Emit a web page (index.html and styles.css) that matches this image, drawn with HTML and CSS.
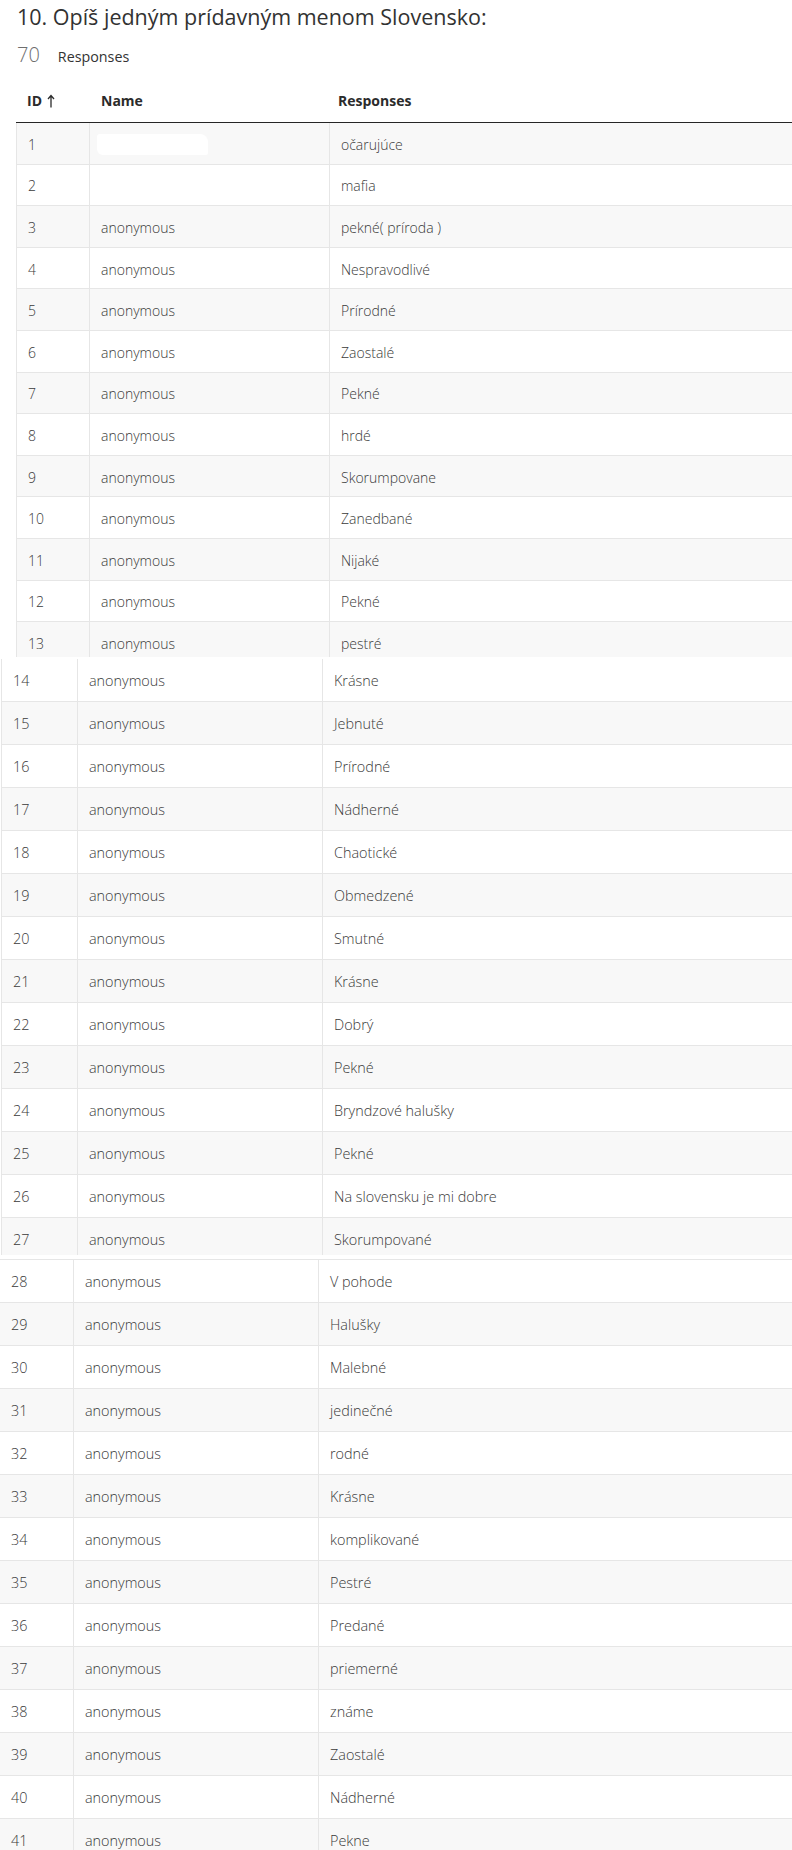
FILE: index.html
```html
<!DOCTYPE html>
<html lang="sk">
<head>
<meta charset="utf-8">
<title>10. Opíš jedným prídavným menom Slovensko</title>
<link rel="stylesheet" href="styles.css">
</head>
<body>
<main class="report">
  <h1 class="question">10. Opíš jedným prídavným menom Slovensko:</h1>
  <div class="summary"><span class="summary-count">70</span><span class="summary-label">Responses</span></div>

  <section class="part part-1">
    <div class="row row-head">
      <div class="cell">ID<svg class="sort-icon" width="8" height="14" viewBox="0 0 8 14"><path d="M4 1.5V13.5M1 5L4 1.5L7 5" fill="none" stroke="#2b2b2b" stroke-width="1.3"/></svg></div>
      <div class="cell">Name</div>
      <div class="cell">Responses</div>
    </div>
    <div class="row"><div class="cell">1</div><div class="cell"><span class="redacted"></span></div><div class="cell">očarujúce</div></div>
    <div class="row"><div class="cell">2</div><div class="cell"></div><div class="cell">mafia</div></div>
    <div class="row"><div class="cell">3</div><div class="cell">anonymous</div><div class="cell">pekné( príroda )</div></div>
    <div class="row"><div class="cell">4</div><div class="cell">anonymous</div><div class="cell">Nespravodlivé</div></div>
    <div class="row"><div class="cell">5</div><div class="cell">anonymous</div><div class="cell">Prírodné</div></div>
    <div class="row"><div class="cell">6</div><div class="cell">anonymous</div><div class="cell">Zaostalé</div></div>
    <div class="row"><div class="cell">7</div><div class="cell">anonymous</div><div class="cell">Pekné</div></div>
    <div class="row"><div class="cell">8</div><div class="cell">anonymous</div><div class="cell">hrdé</div></div>
    <div class="row"><div class="cell">9</div><div class="cell">anonymous</div><div class="cell">Skorumpovane</div></div>
    <div class="row"><div class="cell">10</div><div class="cell">anonymous</div><div class="cell">Zanedbané</div></div>
    <div class="row"><div class="cell">11</div><div class="cell">anonymous</div><div class="cell">Nijaké</div></div>
    <div class="row"><div class="cell">12</div><div class="cell">anonymous</div><div class="cell">Pekné</div></div>
    <div class="row"><div class="cell">13</div><div class="cell">anonymous</div><div class="cell">pestré</div></div>
  </section>

  <section class="part part-2">
    <div class="row"><div class="cell">14</div><div class="cell">anonymous</div><div class="cell">Krásne</div></div>
    <div class="row"><div class="cell">15</div><div class="cell">anonymous</div><div class="cell">Jebnuté</div></div>
    <div class="row"><div class="cell">16</div><div class="cell">anonymous</div><div class="cell">Prírodné</div></div>
    <div class="row"><div class="cell">17</div><div class="cell">anonymous</div><div class="cell">Nádherné</div></div>
    <div class="row"><div class="cell">18</div><div class="cell">anonymous</div><div class="cell">Chaotické</div></div>
    <div class="row"><div class="cell">19</div><div class="cell">anonymous</div><div class="cell">Obmedzené</div></div>
    <div class="row"><div class="cell">20</div><div class="cell">anonymous</div><div class="cell">Smutné</div></div>
    <div class="row"><div class="cell">21</div><div class="cell">anonymous</div><div class="cell">Krásne</div></div>
    <div class="row"><div class="cell">22</div><div class="cell">anonymous</div><div class="cell">Dobrý</div></div>
    <div class="row"><div class="cell">23</div><div class="cell">anonymous</div><div class="cell">Pekné</div></div>
    <div class="row"><div class="cell">24</div><div class="cell">anonymous</div><div class="cell">Bryndzové halušky</div></div>
    <div class="row"><div class="cell">25</div><div class="cell">anonymous</div><div class="cell">Pekné</div></div>
    <div class="row"><div class="cell">26</div><div class="cell">anonymous</div><div class="cell">Na slovensku je mi dobre</div></div>
    <div class="row"><div class="cell">27</div><div class="cell">anonymous</div><div class="cell">Skorumpované</div></div>
  </section>

  <section class="part part-3">
    <div class="row"><div class="cell">28</div><div class="cell">anonymous</div><div class="cell">V pohode</div></div>
    <div class="row"><div class="cell">29</div><div class="cell">anonymous</div><div class="cell">Halušky</div></div>
    <div class="row"><div class="cell">30</div><div class="cell">anonymous</div><div class="cell">Malebné</div></div>
    <div class="row"><div class="cell">31</div><div class="cell">anonymous</div><div class="cell">jedinečné</div></div>
    <div class="row"><div class="cell">32</div><div class="cell">anonymous</div><div class="cell">rodné</div></div>
    <div class="row"><div class="cell">33</div><div class="cell">anonymous</div><div class="cell">Krásne</div></div>
    <div class="row"><div class="cell">34</div><div class="cell">anonymous</div><div class="cell">komplikované</div></div>
    <div class="row"><div class="cell">35</div><div class="cell">anonymous</div><div class="cell">Pestré</div></div>
    <div class="row"><div class="cell">36</div><div class="cell">anonymous</div><div class="cell">Predané</div></div>
    <div class="row"><div class="cell">37</div><div class="cell">anonymous</div><div class="cell">priemerné</div></div>
    <div class="row"><div class="cell">38</div><div class="cell">anonymous</div><div class="cell">známe</div></div>
    <div class="row"><div class="cell">39</div><div class="cell">anonymous</div><div class="cell">Zaostalé</div></div>
    <div class="row"><div class="cell">40</div><div class="cell">anonymous</div><div class="cell">Nádherné</div></div>
    <div class="row"><div class="cell">41</div><div class="cell">anonymous</div><div class="cell">Pekne</div></div>
  </section>
</main>
</body>
</html>
```
FILE: styles.css
```css
* { box-sizing: border-box; }

html, body {
  margin: 0;
  padding: 0;
  background: #ffffff;
}

body {
  font-family: "Open Sans", "Noto Sans", "DejaVu Sans", sans-serif;
  color: #3b3b3b;
  width: 792px;
  height: 1850px;
  overflow: hidden;
}

.report {
  display: flex;
  flex-direction: column;
}

.question {
  margin: 0;
  padding: 2px 0 0 17px;
  font-size: 21.5px;
  line-height: 30px;
  font-weight: 400;
  color: #323232;
}

.summary {
  display: flex;
  align-items: baseline;
  gap: 18px;
  margin-top: 9px;
  padding-left: 17px;
  height: 28px;
  line-height: 28px;
}

.summary-count {
  font-size: 20px;
  font-weight: 300;
  color: #6e6e6e;
}

.summary-label {
  font-size: 14.3px;
  font-weight: 400;
  color: #333333;
}

/* stitched table parts */
.part {
  overflow: hidden;
  flex: none;
}

.row {
  display: grid;
  grid-template-columns: var(--c1) var(--c2) 1fr;
  border-bottom: 1px solid #e6e6e6;
  font-weight: 300;
  color: #3a3a3a;
}

.cell {
  display: flex;
  align-items: center;
  padding-left: 11px;
  border-right: 1px solid #e6e6e6;
  white-space: nowrap;
  overflow: hidden;
}

.cell:last-child { border-right: none; }

/* part 1 : header + rows 1–13 */
.part-1 {
  --c1: 73px;
  --c2: 240px;
  margin-top: 16px;
  margin-left: 16px;
  height: 572px;
}

.part-1 .row {
  height: 41.6px;
  font-size: 14px;
  border-left: 1px solid #e6e6e6;
}

.part-1 .row .cell { padding-top: 2px; }

.part-1 .row:nth-child(even) { background: #f8f8f8; }

.part-1 .row-head {
  height: 38px;
  border-left: none;
  border-bottom: 1px solid #262626;
  background: transparent;
  font-weight: 700;
  color: #2b2b2b;
}

.part-1 .row-head .cell {
  align-items: flex-start;
  padding-top: 6px;
  line-height: 20px;
  border-right: none;
}

.part-1 .row-head .cell:nth-child(2) { padding-left: 12px; }
.part-1 .row-head .cell:nth-child(3) { padding-left: 9px; }

.sort-icon {
  margin: 3px 0 0 5px;
  flex: none;
}

.redacted {
  display: block;
  width: 111px;
  height: 21px;
  margin-left: -4px;
  margin-top: 1px;
  background: #ffffff;
  border-radius: 3px 8px 2px 6px;
}

/* part 2 : rows 14–27 */
.part-2 {
  --c1: 76px;
  --c2: 245px;
  margin-left: 1px;
  padding-top: 2px;
  height: 598px;
}

.part-2 .row {
  height: 43px;
  font-size: 14.4px;
  border-left: 1px solid #e6e6e6;
}

.part-2 .row:nth-child(even) { background: #f8f8f8; }

/* part 3 : rows 28–41 */
.part-3 {
  --c1: 74px;
  --c2: 245px;
  margin-top: 4px;
  border-top: 1px solid #e6e6e6;
  height: 591px;
}

.part-3 .row {
  height: 43px;
  font-size: 14.4px;
}

.part-3 .row .cell { padding-top: 1px; }

.part-3 .row:nth-child(even) { background: #f8f8f8; }
```
